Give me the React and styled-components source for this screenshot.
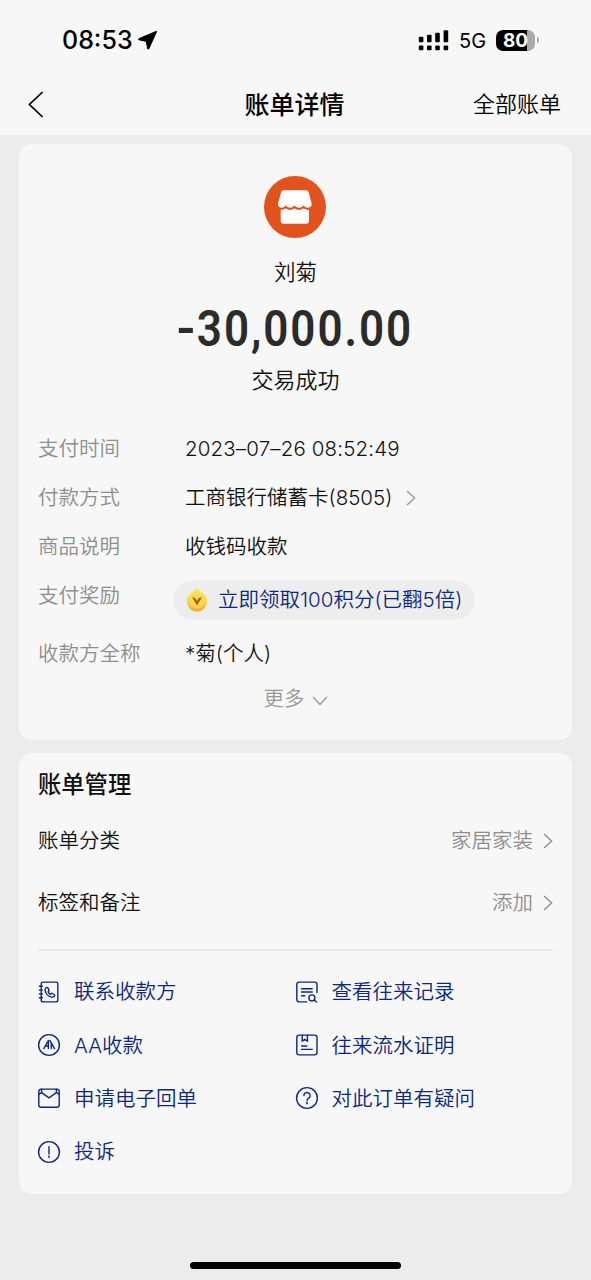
import styled, { createGlobalStyle } from 'styled-components';

const rows = [
  { label: '支付时间', value: '2023–07–26 08:52:49', spacing: '0.15px' },
  { label: '付款方式', value: '工商银行储蓄卡(8505)', arrow: true },
  { label: '商品说明', value: '收钱码收款' },
  { label: '支付奖励', reward: '立即领取100积分(已翻5倍)' },
  { label: '收款方全称', value: '*菊(个人)' },
];

const settings = [
  { label: '账单分类', value: '家居家装' },
  { label: '标签和备注', value: '添加' },
];

const actions = [
  { label: '联系收款方', icon: 'contact' },
  { label: '查看往来记录', icon: 'records' },
  { label: 'AA收款', icon: 'aa' },
  { label: '往来流水证明', icon: 'proof' },
  { label: '申请电子回单', icon: 'mail' },
  { label: '对此订单有疑问', icon: 'question' },
  { label: '投诉', icon: 'complain' },
];

const icons = {
  contact: (
    <>
      <rect x="4.2" y="2.1" width="16.6" height="19.8" rx="1.8" />
      <path d="M2.4 6.3h3M2.4 10.1h3M2.4 13.9h3M2.4 17.7h3" />
      <path d="M9.2 7.7c-.9.6-1.3 1.5-1.1 2.6.5 3.3 3.4 6.2 6.6 6.8 1.2.2 2.3-.3 2.9-1.3.3-.5.1-1-.4-1.3l-1.8-1c-.5-.3-1-.1-1.3.3l-.5.6c-1.1-.5-2-1.4-2.5-2.5l.6-.5c.4-.4.5-.8.3-1.3l-.9-1.900c-.4-.7-1.1-.9-1.900-.5z" />
    </>
  ),
  records: (
    <>
      <path d="M11.8 21.9H4.1a2.3 2.3 0 0 1-2.3-2.3V4.4a2.3 2.3 0 0 1 2.3-2.3h15.6A2.3 2.3 0 0 1 22 4.4v8.2" />
      <path d="M6.6 8.8h10.6M6.6 12h10.6M6.6 15.7h3.2" />
      <circle cx="16.9" cy="17.9" r="3" />
      <path d="m19.2 20 2.4 2" />
    </>
  ),
  aa: (
    <>
      <circle cx="12" cy="12" r="10.4" />
      <path d="m6.8 15.6 4.6-8v8M8.5 13h2.9M12.9 7.6l4.6 8M14.3 10.4v5.2" />
    </>
  ),
  proof: (
    <>
      <rect x="1.8" y="2.1" width="20.2" height="19.8" rx="2.3" />
      <path d="M7.2 2.1v6.2l2.6-1.9 2.6 1.9V2.1M6.6 13h5.2M6.6 16.4h10.6" />
    </>
  ),
  mail: (
    <>
      <rect x="1.8" y="3.1" width="20.4" height="18.2" rx="2.3" />
      <path d="m2 8.2 2.6-1.5 7.4 5.1 7.4-5.1 2.6 1.5M4.6 3.2v3.5M19.4 3.2v3.5" />
    </>
  ),
  question: (
    <>
      <circle cx="12" cy="12" r="10.4" />
      <path d="M8.9 9.6a3.1 3.1 0 1 1 4.8 2.6c-1.1.7-1.7 1.1-1.7 2.4" />
      <path d="M12 16.2v1.5" />
    </>
  ),
  complain: (
    <>
      <circle cx="12" cy="12" r="10.4" />
      <path d="M12 6.8v7.3M12 15.9v1.6" />
    </>
  ),
};

const Chevron = () => (
  <svg width="10" height="16" viewBox="0 0 10 16" fill="none" stroke="currentColor" strokeWidth="1.4">
    <path d="M1 1l7.6 7L1 15" />
  </svg>
);

const StatusIcons = () => (
  <SignalGroup>
    <svg width="32" height="22" viewBox="0 0 32 22" fill="#000">
      <rect x="0.8" y="7.8" width="4.6" height="5.4" rx="1" />
      <rect x="9" y="5.8" width="4.6" height="7.4" rx="1" />
      <rect x="17.2" y="3.8" width="4.6" height="9.4" rx="1" />
      <rect x="25.6" y="1.2" width="4.6" height="12" rx="1" />
      <rect x="0.8" y="16.6" width="4.6" height="4.6" rx="1" />
      <rect x="9" y="16.6" width="4.6" height="4.6" rx="1" />
      <rect x="17.2" y="16.6" width="4.6" height="4.6" rx="1" />
      <rect x="25.6" y="16.6" width="4.6" height="4.6" rx="1" />
    </svg>
    <Network>5G</Network>
    <Battery>80</Battery>
    <BatteryTip />
  </SignalGroup>
);

const App = () => (
  <>
    <GlobalStyle />
    <Page>
      <Header>
        <StatusBar>
          <Clock>
            08:53
            <svg width="20" height="20" viewBox="0 0 20 20" fill="#000" stroke="#000" strokeLinejoin="round">
              <path d="M18 1.400.8 8.700c-.6.300-.5 1 .2 1.100l7.300 1.600 1.300 7.200c.1.700.9.800 1.200.2L18.500 1.800c.1-.3-.1-.5-.5-.4z" />
            </svg>
          </Clock>
          <StatusIcons />
        </StatusBar>
        <NavBar>
          <BackIcon viewBox="0 0 16 27">
            <path d="M14.6 1 1.4 13.5 14.6 26" />
          </BackIcon>
          <NavTitle>账单详情</NavTitle>
          <NavLink>全部账单</NavLink>
        </NavBar>
      </Header>

      <DetailCard>
        <Avatar>
          <svg width="36" height="36" viewBox="0 0 36 36" fill="#fff">
            <path d="M7 1.300h21.800c1.600 0 2.600.8 3 2.400l2.800 10.600c.5 2.400-1.200 4.400-3.700 4.400-2 0-3.600-.9-4.500-2.400-1.700 3.200-7.100 3.200-9 0-1.700 3.200-6.900 3.200-8.700 0-.9 1.500-2.200 2.400-4.100 2.400-2.500 0-4.100-2-3.600-4.400L4 3.700c.4-1.600 1.400-2.400 3-2.400z" />
            <path d="M3.700 21c2 0 3.700-.5 5-1.700 2.300 2.200 6.200 2.200 8.700 0 2.500 2.200 6.600 2.200 9 0 1.400 1.200 3.300 1.700 5.600 1.700v10.800c0 1.900-1.100 2.900-2.900 2.900H6.600c-1.900 0-2.900-1-2.900-2.900z" />
          </svg>
        </Avatar>
        <Payee>刘菊</Payee>
        <Amount>
          <Minus>-</Minus>30,000.00
        </Amount>
        <TradeStatus>交易成功</TradeStatus>
        {rows.map((row) => (
          <DetailRow key={row.label} $tall={!!row.reward}>
            <DetailLabel>{row.label}</DetailLabel>
            {row.reward ? (
              <Reward>
                <svg width="22" height="26" viewBox="0 0 22 26">
                  <defs>
                    <linearGradient id="coin" x1="0" y1="0" x2="0" y2="1">
                      <stop offset="0" stopColor="#f8e36e" />
                      <stop offset="0.55" stopColor="#fbd84f" />
                      <stop offset="1" stopColor="#f1a73b" />
                    </linearGradient>
                  </defs>
                  <path
                    d="M11 1.4c.7 0 1.2.4 1.9 1 1.5 1.5 3 2.8 4.8 4.3a10.2 10.2 0 1 1-13.4 0c1.8-1.5 3.3-2.8 4.8-4.3.7-.6 1.2-1 1.9-1z"
                    fill="url(#coin)"
                  />
                  <circle cx="11" cy="14" r="7.6" fill="#fbd94e" opacity="0.7" />
                  <path d="m6 10.2 5 8 5-8-3.2.8-1.8 3-1.8-3z" fill="#986516" />
                </svg>
                {row.reward}
              </Reward>
            ) : (
              <DetailValue $spacing={row.spacing}>
                {row.value}
                {row.arrow && (
                  <Muted>
                    <Chevron />
                  </Muted>
                )}
              </DetailValue>
            )}
          </DetailRow>
        ))}
        <More>
          更多
          <svg width="16" height="10" viewBox="0 0 16 10" fill="none" stroke="currentColor" strokeWidth="1.4">
            <path d="M1 1l7 7.4L15 1" />
          </svg>
        </More>
      </DetailCard>

      <ManageCard>
        <SectionTitle>账单管理</SectionTitle>
        {settings.map((item) => (
          <SettingRow key={item.label}>
            <SettingLabel>{item.label}</SettingLabel>
            <SettingValue>
              <SettingLabel>{item.value}</SettingLabel>
              <Chevron />
            </SettingValue>
          </SettingRow>
        ))}
        <Divider />
        <ActionGrid>
          {actions.map((action) => (
            <Action key={action.label}>
              <ActionIcon viewBox="0 0 24 24">{icons[action.icon]}</ActionIcon>
              <ActionLabel>{action.label}</ActionLabel>
            </Action>
          ))}
        </ActionGrid>
      </ManageCard>
      <HomeIndicator />
    </Page>
  </>
);

export default App;

const GlobalStyle = createGlobalStyle`
  * {
    box-sizing: border-box;
  }
  body {
    margin: 0;
    background: #ececec;
  }
  svg {
    display: block;
    flex-shrink: 0;
  }
`;

const Page = styled.div`
  display: flex;
  flex-direction: column;
  width: 591px;
  height: 1280px;
  overflow: hidden;
  background: #ececec;
  color: #111;
  font-family: Inter, 'Noto Sans CJK SC', sans-serif;
  font-size: 20.5px;
  font-weight: 350;
  white-space: nowrap;
`;

const Header = styled.header`
  height: 135px;
  background: #f7f7f7;
  color: #000;
`;

const StatusBar = styled.div`
  display: flex;
  justify-content: space-between;
  align-items: center;
  height: 74px;
  padding: 6px 52px 0 62px;
`;

const Clock = styled.div`
  display: flex;
  align-items: center;
  gap: 5px;
  font-size: 25px;
  font-weight: 500;
`;

const SignalGroup = styled.div`
  display: flex;
  align-items: center;
`;

const Network = styled.span`
  width: 27px;
  margin: 2px 10px 0 9px;
  font-size: 20px;
  font-weight: 400;
`;

const Battery = styled.div`
  width: 39px;
  height: 21px;
  border-radius: 7px;
  background: linear-gradient(to right, #000 31px, #aaa 31px);
  color: #fff;
  font-size: 19px;
  font-weight: 700;
  line-height: 21px;
  text-align: center;
`;

const BatteryTip = styled.span`
  width: 2px;
  height: 6px;
  margin-left: 2px;
  border-radius: 0 3px 3px 0;
  background: #aaa;
`;

const NavBar = styled.div`
  display: grid;
  grid-template-columns: 1fr auto 1fr;
  align-items: center;
  height: 60px;
  padding: 0 30px 0 28px;
`;

const BackIcon = styled.svg`
  width: 16px;
  height: 27px;
  fill: none;
  stroke: #000;
  stroke-width: 1.7;
`;

const NavTitle = styled.h1`
  margin: 0;
  padding-bottom: 2px;
  font-size: 25px;
  font-weight: 500;
`;

const NavLink = styled.span`
  justify-self: end;
  padding-bottom: 4px;
  font-size: 22px;
`;

const Card = styled.section`
  width: 553px;
  margin-left: 19px;
  border-radius: 13px;
  background: #f7f7f7;
`;

const DetailCard = styled(Card)`
  height: 596px;
  margin-top: 9px;
  padding: 32px 19px 0;
`;

const Avatar = styled.div`
  display: flex;
  justify-content: center;
  align-items: center;
  width: 62px;
  height: 62px;
  margin: 0 auto 0 226px;
  border-radius: 50%;
  background: #e2521d;
`;

const Payee = styled.div`
  margin-top: 14px;
  font-size: 21.5px;
  line-height: 40px;
  text-align: center;
`;

const Amount = styled.div`
  margin-top: 7px;
  transform: scaleX(0.88);
  color: #2b2b2b;
  font-family: Roboto, sans-serif;
  font-size: 50px;
  font-weight: 600;
  line-height: 60px;
  letter-spacing: 2.2px;
  text-align: center;
`;

const Minus = styled.span`
  display: inline-block;
  margin-right: 1px;
  transform: scaleX(1.2);
`;

const TradeStatus = styled.div`
  margin: 5px 0 28px;
  font-size: 22px;
  line-height: 32px;
  text-align: center;
`;

const DetailRow = styled.div`
  display: flex;
  height: ${(props) => (props.$tall ? 58 : 49)}px;
  line-height: 50px;
`;

const DetailLabel = styled.span`
  width: 147px;
  color: #8e8e8e;
`;

const DetailValue = styled.span`
  display: flex;
  align-items: center;
  gap: 14px;
  letter-spacing: ${(props) => props.$spacing || 'normal'};
`;

const Muted = styled.span`
  color: #999;
`;

const Reward = styled.div`
  display: flex;
  align-items: center;
  gap: 10px;
  width: 302px;
  height: 40px;
  margin: 9px 0 0 -12px;
  padding-left: 13px;
  border-radius: 20px;
  background: #ededed;
  color: #0c2780;
  line-height: 42px;
`;

const More = styled.div`
  display: flex;
  justify-content: center;
  align-items: center;
  gap: 7px;
  height: 37px;
  color: #999;
  svg {
    margin-top: 8px;
  }
`;

const ManageCard = styled(Card)`
  height: 441px;
  margin-top: 13px;
  padding: 9px 19px 0;
`;

const SectionTitle = styled.h2`
  margin: 0;
  font-size: 23.3px;
  font-weight: 500;
  line-height: 46px;
`;

const SettingRow = styled.div`
  display: flex;
  justify-content: space-between;
  align-items: center;
  height: 62px;
  margin-top: 2px;
  & + & {
    margin-top: 0;
  }
`;

const SettingLabel = styled.span`
  padding-bottom: 4px;
`;

const SettingValue = styled.span`
  display: flex;
  align-items: center;
  gap: 10px;
  color: #8e8e8e;
`;

const Divider = styled.div`
  height: 2px;
  margin: 15px 0 14px;
  background: #e8e8e8;
`;

const ActionGrid = styled.div`
  display: grid;
  grid-template-columns: 257.5px 1fr;
  grid-auto-rows: 53.4px;
`;

const Action = styled.div`
  display: flex;
  align-items: center;
  gap: 13px;
  color: #0c2780;
`;

const ActionIcon = styled.svg`
  width: 24px;
  height: 24px;
  margin-left: -1px;
  fill: none;
  stroke: #0c2780;
  stroke-width: 1.4;
  stroke-linecap: round;
  stroke-linejoin: round;
`;

const ActionLabel = styled.span`
  padding-bottom: 3px;
`;

const HomeIndicator = styled.div`
  width: 211px;
  height: 7px;
  margin: auto auto 11px;
  border-radius: 4px;
  background: #000;
`;
